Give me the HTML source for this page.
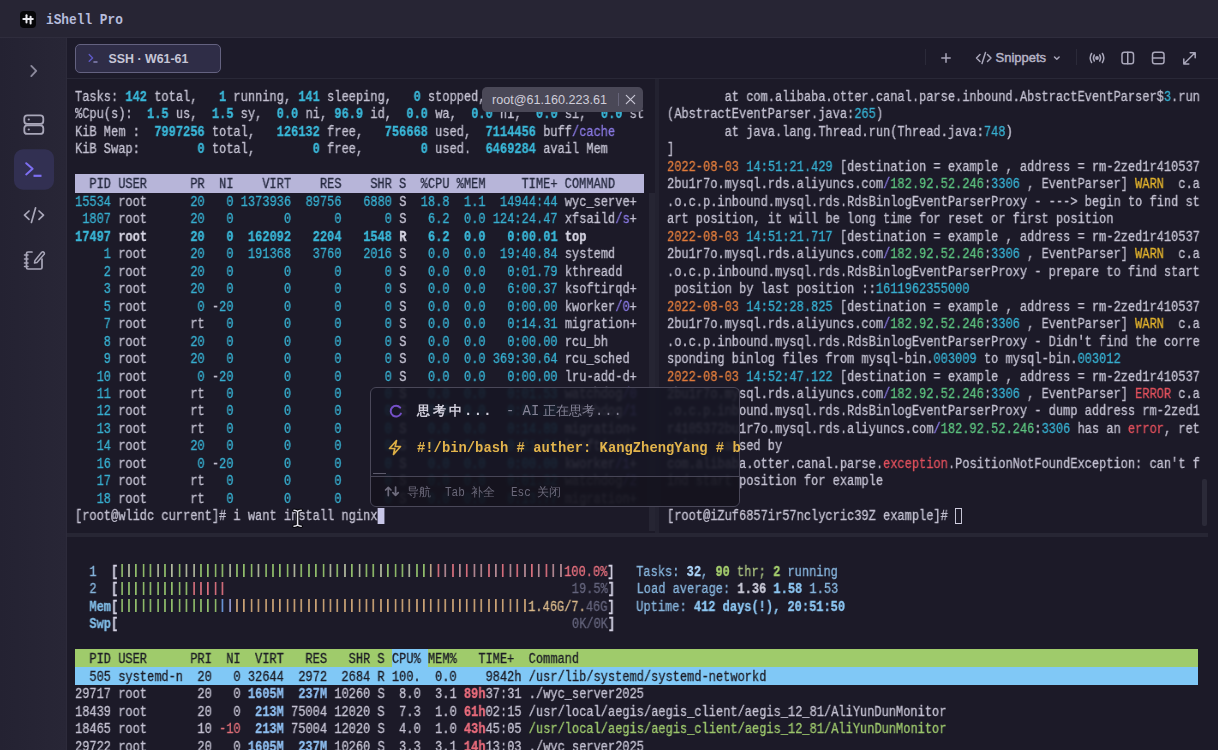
<!DOCTYPE html>
<html><head><meta charset="utf-8">
<style>
*{margin:0;padding:0;box-sizing:border-box}
html,body{width:1218px;height:750px;overflow:hidden;background:#1c1a28}
body{position:relative;font-family:"Liberation Mono",monospace;color:#c3c1d1}
.abs{position:absolute}
#title{left:0;top:0;width:1218px;height:38px;background:#272534;border-bottom:1px solid #2f2d3d}
#corner{left:0;top:0;width:14px;height:14px;background:#000;}
#corner2{left:0;top:0;width:28px;height:28px;border-radius:14px 0 0 0;background:#252332}
#appicon{left:20px;top:11px;width:16px;height:17px;background:#060609;border-radius:4px}
#apptitle{left:46px;top:11.4px;font:bold 14px/18px "Liberation Mono",monospace;color:#b6bcdc;transform:scaleX(0.915);transform-origin:0 0}
#side{left:0;top:38px;width:67px;height:712px;background:linear-gradient(90deg,#242232,#282636);border-right:1px solid #2d2b3b}
#tabbar{left:67px;top:38px;width:1151px;height:41px;background:#1d1b2a;border-bottom:1px solid #292837}
#tab{left:75px;top:44px;width:145.5px;height:29px;border:1.5px solid #646280;border-radius:5px;background:#2f2d47}
#tabtxt{left:108.5px;top:50.5px;font:bold 12.4px/16px "Liberation Sans",sans-serif;color:#c6c5d6}
.ln{height:17.48px;white-space:pre;font-size:14px;line-height:17.48px;-webkit-text-stroke:0.3px}
.ln>span,.ln{}
.pane{position:absolute;overflow:hidden}
.txt{position:relative;top:1.9px;transform:scaleX(0.857143);transform-origin:0 0;will-change:transform}
#left{left:75px;top:86.9px;width:575px;height:440px}
#right{left:667px;top:86.9px;width:535px;height:440px}
#htop{left:75px;top:561.9px;width:1130px;height:190px}
.c{color:#37afd0}
.cb{color:#3ab7d8;font-weight:bold}
.wb{color:#d6d4e2;font-weight:bold}
.p{color:#8878e0}
.o{color:#e07c3c}
.g{color:#5cc07e}
.yb{color:#e3b32c}
.r{color:#e0505c}
.hdr{color:#262a40}
.cur{background:#c8c6e8}
.cur2{outline:1.8px solid #d2d0e2;outline-offset:-1.4px}
#vdiv{left:655px;top:79px;width:4px;height:454px;background:#232230}
#lthumb{left:648.5px;top:193px;width:6.5px;height:338px;background:#262533}
#rthumb{left:1202px;top:479px;width:5px;height:47px;background:#2b2a38;border-radius:2px}
#hdiv{left:67px;top:533px;width:1141px;height:4px;background:#272634}
/* htop */
.bar{display:inline-block;width:8.4px;height:17.48px;vertical-align:top;background:linear-gradient(currentColor,currentColor) no-repeat;background-size:1.9px 13px;background-position:3.25px 0.2px}
.hl{color:#86b4dc}
.hlb{color:#80bce6;font-weight:bold}
.hb{color:#d4d2e4;font-weight:bold}
.hg{color:#92bf6c}
.hg2{color:#b4bca0}
.hp{color:#c0a888}
.hr{color:#d9707e}
.hr2{color:#b88c96}
.hrt{color:#e6707e}
.hgy{color:#64647c}
.hbl{color:#6e9be0}
.hbl2{color:#9aa0d8}
.ho{color:#cca476}
.hot{color:#d8b88a}
.hwb{color:#8cc6f2;font-weight:bold}
.hwb2{color:#aed6fa;font-weight:bold}
.hgb{color:#a6cf6e;font-weight:bold}
.hgt{color:#a9c080}
.hwg{color:#c8c8d6;font-weight:bold}
.hh{color:#1d1d26}
.hhc{color:#1d1d26}
.hsel{color:#1d1d26}
.hred{color:#e06e78}
.hcy{color:#8ebef0;font-weight:bold}
.hrb{color:#ea6c7c;font-weight:bold}
.hgrn{color:#9cc66c}
/* toolbar */
.tb{stroke:#a9a7ba;fill:none;stroke-width:1.5;stroke-linecap:round;stroke-linejoin:round}
#snip{left:995.5px;top:50.3px;font:13px/16px "Liberation Sans",sans-serif;color:#b6b4c6;-webkit-text-stroke:0.45px #b6b4c6}
#tip{left:482px;top:87px;width:161px;height:25px;background:#4a4857;border-radius:5px}
#tiptxt{left:492px;top:92px;font:12.6px/16px "Liberation Sans",sans-serif;color:#cfcdd9}
#popup{left:370.3px;top:387.3px;width:370px;height:120px;border:1.2px solid #4a4859;border-radius:6px;background:rgba(23,22,36,0.89);backdrop-filter:blur(1.3px);overflow:hidden}
#popdiv{left:0;top:87.9px;width:100%;height:1.2px;background:#484657}
.pm{font-family:"Liberation Mono",monospace;font-size:15px;line-height:18px;white-space:pre;transform:scaleX(0.922);transform-origin:0 0}
.pf{font-family:"Liberation Mono",monospace;font-size:12px;line-height:14px;white-space:pre;color:#6b697a;transform:scaleX(0.9167);transform-origin:0 0}
#pfoot{left:0;top:89px;width:100%;height:31px;background:rgba(16,15,24,0.35)}
</style></head><body>
<div id="title" class="abs"></div>
<div id="appicon" class="abs"><svg width="16" height="17" viewBox="20 11 16 17"><g stroke="#ecebf2" stroke-width="2" stroke-linecap="round"><line x1="26.5" y1="15.3" x2="26.5" y2="22.5"/><line x1="30.6" y1="16.8" x2="30.6" y2="23.6"/><line x1="23.3" y1="18.9" x2="32.8" y2="18.9"/></g></svg></div>
<div id="apptitle" class="abs">iShell Pro</div>
<div id="side" class="abs"></div>
<svg class="abs" style="left:0;top:38px" width="67" height="712" viewBox="0 38 67 712">
 <path d="M31.3 65.9 L36.2 70.95 L31.3 76.1" stroke="#8c8a9c" stroke-width="1.9" fill="none" stroke-linecap="round" stroke-linejoin="round"/>
 <rect x="24.3" y="115.3" width="19" height="8.6" rx="3" stroke="#a9a7b9" stroke-width="1.8" fill="none"/>
 <rect x="24.3" y="125.3" width="19" height="8.6" rx="3" stroke="#a9a7b9" stroke-width="1.8" fill="none"/>
 <circle cx="28.8" cy="119.5" r="1.1" fill="#a9a7b9"/><circle cx="28.8" cy="129.5" r="1.1" fill="#a9a7b9"/>
 <rect x="14" y="149.3" width="40" height="40.4" rx="9" fill="#323052"/>
 <path d="M26.2 163.2 L32.6 168.8 L26.2 174.4" stroke="#7d6ff2" stroke-width="2" fill="none" stroke-linecap="round" stroke-linejoin="round"/>
 <line x1="33.5" y1="175.8" x2="41.5" y2="175.8" stroke="#7d6ff2" stroke-width="2.2"/>
 <path d="M29 211 L24.5 215.2 L29 219.4 M39 211 L43.5 215.2 L39 219.4 M35.6 207.8 L31.4 222.4" stroke="#a9a7b9" stroke-width="1.7" fill="none" stroke-linecap="round" stroke-linejoin="round"/>
 <path d="M32 252 H28 Q26.5 252 26.5 253.5 V267.5 Q26.5 269 28 269 H40.5 Q42 269 42 267.5 V259" stroke="#a9a7b9" stroke-width="1.7" fill="none" stroke-linecap="round"/>
 <path d="M24.5 255 H28 M24.5 259 H28 M24.5 263 H28 M24.5 266.5 H28" stroke="#a9a7b9" stroke-width="1.5" stroke-linecap="round"/>
 <path d="M35 260.5 L41.5 252.5 Q43 251 44 252.5 Q45 254 43.5 255 L37 262.5 L34.5 263 Z" stroke="#a9a7b9" stroke-width="1.5" fill="none" stroke-linejoin="round"/>
</svg>
<div id="tabbar" class="abs"></div>
<div id="tab" class="abs"></div>
<svg class="abs" style="left:85px;top:50px" width="16" height="16" viewBox="85 50 16 16"><path d="M89.2 54.6 L92.6 57.9 L89.2 61.2" stroke="#5e5ac8" stroke-width="1.4" fill="none" stroke-linecap="round" stroke-linejoin="round"/><line x1="93.4" y1="62" x2="97.5" y2="62" stroke="#8e8cc0" stroke-width="1.4"/></svg>
<div id="tabtxt" class="abs">SSH · W61-61</div>
<!-- toolbar -->
<svg class="abs" style="left:910px;top:38px" width="308" height="41" viewBox="910 38 308 41">
 <line x1="925.5" y1="49" x2="925.5" y2="65" stroke="#2b2a39" stroke-width="1"/>
 <path d="M946 53.8 V62.2 M941.8 58 H950.2" class="tb" stroke-width="1.5"/>
 <path d="M980 54.5 L976.5 58 L980 61.5 M987.5 54.5 L991 58 L987.5 61.5 M985.5 52.5 L982 63.5" class="tb" stroke-width="1.4"/>
 <path d="M1054.5 57 L1056.8 59.3 L1059.1 57" class="tb" stroke-width="1.2"/>
 <line x1="1076.5" y1="49" x2="1076.5" y2="65" stroke="#2b2a39" stroke-width="1"/>
 <circle cx="1097" cy="58" r="1.9" fill="#a9a7ba"/>
 <path d="M1094.3 55 Q1092.5 58 1094.3 61 M1099.7 55 Q1101.5 58 1099.7 61 M1091.6 53.5 Q1088.8 58 1091.6 62.5 M1102.4 53.5 Q1105.2 58 1102.4 62.5" class="tb" stroke-width="1.4"/>
 <rect x="1122" y="52.3" width="11.5" height="11.5" rx="2.3" class="tb" stroke-width="1.6"/>
 <line x1="1127.75" y1="52.3" x2="1127.75" y2="63.8" class="tb" stroke-width="1.6"/>
 <rect x="1152.5" y="52.3" width="11.5" height="11.5" rx="2.3" class="tb" stroke-width="1.6"/>
 <line x1="1152.5" y1="58.05" x2="1164" y2="58.05" class="tb" stroke-width="1.6"/>
 <path d="M1184 63.8 L1195 52.8 M1190.2 52.8 H1195.2 V57.8 M1183.8 59 V64 H1188.8" class="tb" stroke-width="1.4"/>
</svg>
<div id="snip" class="abs">Snippets</div>

<div id="vdiv" class="abs"></div>
<div id="lthumb" class="abs"></div>
<div id="rthumb" class="abs"></div>
<div id="hdiv" class="abs"></div>

<div class="abs" style="left:74.7px;top:174.1px;width:569.1px;height:18.5px;background:#b7b5d9"></div>
<div id="left" class="pane"><div class="txt">
<div class="ln">Tasks: <span class="cb">142</span> total,   <span class="cb">1</span> running, <span class="cb">141</span> sleeping,   <span class="cb">0</span> stopped,   <span class="cb">0</span> zombie</div>
<div class="ln">%Cpu(s):  <span class="cb">1.5</span> us,  <span class="cb">1.5</span> sy,  <span class="cb">0.0</span> ni, <span class="cb">96.9</span> id,  <span class="cb">0.0</span> wa,  <span class="cb">0.0</span> hi,  <span class="cb">0.0</span> si,  <span class="cb">0.0</span> st</div>
<div class="ln">KiB Mem :  <span class="cb">7997256</span> total,   <span class="cb">126132</span> free,   <span class="cb">756668</span> used,  <span class="cb">7114456</span> buff<span class="p">/cache</span></div>
<div class="ln">KiB Swap:        <span class="cb">0</span> total,        <span class="cb">0</span> free,        <span class="cb">0</span> used.  <span class="cb">6469284</span> avail Mem</div>
<div class="ln"></div>
<div class="ln"><span class="hdr">  PID USER      PR  NI    VIRT    RES    SHR S  %CPU %MEM     TIME+ COMMAND    </span></div>
<div class="ln"><span class="c">15534</span> root      <span class="c">20</span> <span class="c">  0</span> <span class="c">1373936</span> <span class="c"> 89756</span> <span class="c">  6880</span> S <span class="c"> 18.8</span> <span class="c"> 1.1</span> <span class="c"> 14944:44</span> wyc_serve+</div>
<div class="ln"><span class="c"> 1807</span> root      <span class="c">20</span> <span class="c">  0</span> <span class="c">      0</span> <span class="c">     0</span> <span class="c">     0</span> S <span class="c">  6.2</span> <span class="c"> 0.0</span> <span class="c">124:24.47</span> xfsaild<span class="p">/s</span>+</div>
<div class="ln"><span class="cb">17497</span> <span class="wb">root    </span>  <span class="cb">20</span> <span class="cb">  0</span> <span class="cb"> 162092</span> <span class="cb">  2204</span> <span class="cb">  1548</span> <span class="wb">R</span> <span class="cb">  6.2</span> <span class="cb"> 0.0</span> <span class="cb">  0:00.01</span> <span class="wb">top</span></div>
<div class="ln"><span class="c">    1</span> root      <span class="c">20</span> <span class="c">  0</span> <span class="c"> 191368</span> <span class="c">  3760</span> <span class="c">  2016</span> S <span class="c">  0.0</span> <span class="c"> 0.0</span> <span class="c"> 19:40.84</span> systemd</div>
<div class="ln"><span class="c">    2</span> root      <span class="c">20</span> <span class="c">  0</span> <span class="c">      0</span> <span class="c">     0</span> <span class="c">     0</span> S <span class="c">  0.0</span> <span class="c"> 0.0</span> <span class="c">  0:01.79</span> kthreadd</div>
<div class="ln"><span class="c">    3</span> root      <span class="c">20</span> <span class="c">  0</span> <span class="c">      0</span> <span class="c">     0</span> <span class="c">     0</span> S <span class="c">  0.0</span> <span class="c"> 0.0</span> <span class="c">  6:00.37</span> ksoftirqd+</div>
<div class="ln"><span class="c">    5</span> root      <span class="c"> 0</span> -<span class="c">20</span> <span class="c">      0</span> <span class="c">     0</span> <span class="c">     0</span> S <span class="c">  0.0</span> <span class="c"> 0.0</span> <span class="c">  0:00.00</span> kworker<span class="p">/0</span>+</div>
<div class="ln"><span class="c">    7</span> root      rt <span class="c">  0</span> <span class="c">      0</span> <span class="c">     0</span> <span class="c">     0</span> S <span class="c">  0.0</span> <span class="c"> 0.0</span> <span class="c">  0:14.31</span> migration+</div>
<div class="ln"><span class="c">    8</span> root      <span class="c">20</span> <span class="c">  0</span> <span class="c">      0</span> <span class="c">     0</span> <span class="c">     0</span> S <span class="c">  0.0</span> <span class="c"> 0.0</span> <span class="c">  0:00.00</span> rcu_bh</div>
<div class="ln"><span class="c">    9</span> root      <span class="c">20</span> <span class="c">  0</span> <span class="c">      0</span> <span class="c">     0</span> <span class="c">     0</span> S <span class="c">  0.0</span> <span class="c"> 0.0</span> <span class="c">369:30.64</span> rcu_sched</div>
<div class="ln"><span class="c">   10</span> root      <span class="c"> 0</span> -<span class="c">20</span> <span class="c">      0</span> <span class="c">     0</span> <span class="c">     0</span> S <span class="c">  0.0</span> <span class="c"> 0.0</span> <span class="c">  0:00.00</span> lru-add-d+</div>
<div class="ln"><span class="c">   11</span> root      rt <span class="c">  0</span> <span class="c">      0</span> <span class="c">     0</span> <span class="c">     0</span> S <span class="c">  0.0</span> <span class="c"> 0.0</span> <span class="c">  0:01.53</span> watchdog<span class="p">/0</span></div>
<div class="ln"><span class="c">   12</span> root      rt <span class="c">  0</span> <span class="c">      0</span> <span class="c">     0</span> <span class="c">     0</span> S <span class="c">  0.0</span> <span class="c"> 0.0</span> <span class="c">  0:01.20</span> watchdog<span class="p">/1</span></div>
<div class="ln"><span class="c">   13</span> root      rt <span class="c">  0</span> <span class="c">      0</span> <span class="c">     0</span> <span class="c">     0</span> S <span class="c">  0.0</span> <span class="c"> 0.0</span> <span class="c">  0:14.89</span> migration+</div>
<div class="ln"><span class="c">   14</span> root      <span class="c">20</span> <span class="c">  0</span> <span class="c">      0</span> <span class="c">     0</span> <span class="c">     0</span> S <span class="c">  0.0</span> <span class="c"> 0.0</span> <span class="c">  0:21.04</span> ksoftirqd+</div>
<div class="ln"><span class="c">   16</span> root      <span class="c"> 0</span> -<span class="c">20</span> <span class="c">      0</span> <span class="c">     0</span> <span class="c">     0</span> S <span class="c">  0.0</span> <span class="c"> 0.0</span> <span class="c">  0:00.00</span> kworker<span class="p">/1</span>+</div>
<div class="ln"><span class="c">   17</span> root      rt <span class="c">  0</span> <span class="c">      0</span> <span class="c">     0</span> <span class="c">     0</span> S <span class="c">  0.0</span> <span class="c"> 0.0</span> <span class="c">  0:01.32</span> watchdog<span class="p">/2</span></div>
<div class="ln"><span class="c">   18</span> root      rt <span class="c">  0</span> <span class="c">      0</span> <span class="c">     0</span> <span class="c">     0</span> S <span class="c">  0.0</span> <span class="c"> 0.0</span> <span class="c">  0:13.77</span> migration+</div>
<div class="ln">[root@wlidc current]# i want install nginx<span class="cur"> </span></div>
</div></div>
<div id="right" class="pane"><div class="txt">
<div class="ln">        at com.alibaba.otter.canal.parse.inbound.AbstractEventParser$<span class="c">3</span>.run</div>
<div class="ln">(AbstractEventParser.java:<span class="c">265</span>)</div>
<div class="ln">        at java.lang.Thread.run(Thread.java:<span class="c">748</span>)</div>
<div class="ln">]</div>
<div class="ln"><span class="o">2022-08-03</span> <span class="c">14:51:21.429</span> [destination = example , address = rm-2zed1r410537</div>
<div class="ln">2bu1r7o.mysql.rds.aliyuncs.com<span class="p">/</span><span class="g">182.92.52.246</span>:<span class="c">3306</span> , EventParser] <span class="yb">WARN</span>  c.a</div>
<div class="ln">.o.c.p.inbound.mysql.rds.RdsBinlogEventParserProxy - ---&gt; begin to find st</div>
<div class="ln">art position, it will be long time for reset or first position</div>
<div class="ln"><span class="o">2022-08-03</span> <span class="c">14:51:21.717</span> [destination = example , address = rm-2zed1r410537</div>
<div class="ln">2bu1r7o.mysql.rds.aliyuncs.com<span class="p">/</span><span class="g">182.92.52.246</span>:<span class="c">3306</span> , EventParser] <span class="yb">WARN</span>  c.a</div>
<div class="ln">.o.c.p.inbound.mysql.rds.RdsBinlogEventParserProxy - prepare to find start</div>
<div class="ln"> position by last position ::<span class="c">1611962355000</span></div>
<div class="ln"><span class="o">2022-08-03</span> <span class="c">14:52:28.825</span> [destination = example , address = rm-2zed1r410537</div>
<div class="ln">2bu1r7o.mysql.rds.aliyuncs.com<span class="p">/</span><span class="g">182.92.52.246</span>:<span class="c">3306</span> , EventParser] <span class="yb">WARN</span>  c.a</div>
<div class="ln">.o.c.p.inbound.mysql.rds.RdsBinlogEventParserProxy - Didn't find the corre</div>
<div class="ln">sponding binlog files from mysql-bin.<span class="c">003009</span> to mysql-bin.<span class="c">003012</span></div>
<div class="ln"><span class="o">2022-08-03</span> <span class="c">14:52:47.122</span> [destination = example , address = rm-2zed1r410537</div>
<div class="ln">2bu1r7o.mysql.rds.aliyuncs.com<span class="p">/</span><span class="g">182.92.52.246</span>:<span class="c">3306</span> , EventParser] <span class="r">ERROR</span> c.a</div>
<div class="ln">.o.c.p.inbound.mysql.rds.RdsBinlogEventParserProxy - dump address rm-2zed1</div>
<div class="ln">r4105372bu1r7o.mysql.rds.aliyuncs.com<span class="p">/</span><span class="g">182.92.52.246</span>:<span class="c">3306</span> has an <span class="r">error</span>, ret</div>
<div class="ln">rying. caused by</div>
<div class="ln">com.alibaba.otter.canal.parse.<span class="r">exception</span>.PositionNotFoundException: can't f</div>
<div class="ln">ind start position for example</div>
<div class="ln"></div>
<div class="ln">[root@iZuf6857ir57nclycric39Z example]# <span class="cur2"> </span></div>
</div></div>
<div class="abs" style="left:74.7px;top:649.3px;width:1123.6px;height:17.6px;background:#9fcb6b"></div>
<div class="abs" style="left:391.8px;top:649.3px;width:36px;height:17.6px;background:#80c8f6"></div>
<div class="abs" style="left:74.7px;top:666.9px;width:1123.6px;height:17.7px;background:#80c8f6"></div>
<div id="htop" class="pane"><div class="txt">
<div class="ln">  <span class="hl">1</span>  <span class="hb">[</span><i class="bar hg"></i><i class="bar hg2"></i><i class="bar hg"></i><i class="bar hg"></i><i class="bar hg"></i><i class="bar hg2"></i><i class="bar hg"></i><i class="bar hg2"></i><i class="bar hg"></i><i class="bar hg2"></i><i class="bar hg2"></i><i class="bar hg"></i><i class="bar hg"></i><i class="bar hg"></i><i class="bar hg"></i><i class="bar hg2"></i><i class="bar hg"></i><i class="bar hg"></i><i class="bar hg"></i><i class="bar hg2"></i><i class="bar hg"></i><i class="bar hg"></i><i class="bar hg"></i><i class="bar hg"></i><i class="bar hg2"></i><i class="bar hg"></i><i class="bar hg"></i><i class="bar hg"></i><i class="bar hg"></i><i class="bar hg2"></i><i class="bar hg"></i><i class="bar hg2"></i><i class="bar hg"></i><i class="bar hg2"></i><i class="bar hg"></i><i class="bar hg"></i><i class="bar hg2"></i><i class="bar hg"></i><i class="bar hg"></i><i class="bar hg"></i><i class="bar hg2"></i><i class="bar hg"></i><i class="bar hg"></i><i class="bar hp"></i><i class="bar hr"></i><i class="bar hr2"></i><i class="bar hr"></i><i class="bar hr2"></i><i class="bar hr"></i><i class="bar hr2"></i><i class="bar hr2"></i><i class="bar hr"></i><i class="bar hr2"></i><i class="bar hr"></i><i class="bar hr2"></i><i class="bar hr"></i><i class="bar hr2"></i><i class="bar hr"></i><i class="bar hr2"></i><i class="bar hr"></i><i class="bar hr2"></i><i class="bar hr2"></i><span class="hrt">100.0%</span><span class="hb">]</span>   <span class="hl">Tasks: </span><span class="hwb2">32</span><span class="hl">, </span><span class="hgb">90</span><span class="hgt"> thr; </span><span class="hgb">2</span><span class="hl"> running</span></div>
<div class="ln">  <span class="hl">2</span>  <span class="hb">[</span><i class="bar hg"></i><i class="bar hg"></i><i class="bar hg"></i><i class="bar hg"></i><i class="bar hg"></i><i class="bar hg"></i><i class="bar hg"></i><i class="bar hg"></i><i class="bar hg"></i><i class="bar hg"></i><i class="bar hr"></i><i class="bar hr"></i><i class="bar hr"></i><i class="bar hr"></i><i class="bar hr"></i>                                                <span class="hgy">19.5%</span><span class="hb">]</span>   <span class="hl">Load average: </span><span class="hwg">1.36</span> <span class="hwb">1.58</span> <span class="hl">1.53</span></div>
<div class="ln">  <span class="hlb">Mem</span><span class="hb">[</span><i class="bar hg"></i><i class="bar hg"></i><i class="bar hg"></i><i class="bar hg"></i><i class="bar hg"></i><i class="bar hg"></i><i class="bar hg"></i><i class="bar hg"></i><i class="bar hg"></i><i class="bar hg"></i><i class="bar hg"></i><i class="bar hg"></i><i class="bar hg"></i><i class="bar hg"></i><i class="bar hbl"></i><i class="bar hbl2"></i><i class="bar ho"></i><i class="bar ho"></i><i class="bar ho"></i><i class="bar ho"></i><i class="bar ho"></i><i class="bar ho"></i><i class="bar ho"></i><i class="bar ho"></i><i class="bar ho"></i><i class="bar ho"></i><i class="bar ho"></i><i class="bar ho"></i><i class="bar ho"></i><i class="bar ho"></i><i class="bar ho"></i><i class="bar ho"></i><i class="bar ho"></i><i class="bar ho"></i><i class="bar ho"></i><i class="bar ho"></i><i class="bar ho"></i><i class="bar ho"></i><i class="bar ho"></i><i class="bar ho"></i><i class="bar ho"></i><i class="bar ho"></i><i class="bar ho"></i><i class="bar ho"></i><i class="bar ho"></i><i class="bar ho"></i><i class="bar ho"></i><i class="bar ho"></i><i class="bar ho"></i><i class="bar ho"></i><i class="bar ho"></i><i class="bar ho"></i><i class="bar ho"></i><i class="bar ho"></i><i class="bar ho"></i><i class="bar ho"></i><i class="bar ho"></i><span class="hot">1.46G/7.</span><span class="hgy">46G</span><span class="hb">]</span>   <span class="hl">Uptime: </span><span class="hwb">412 days(!), 20:51:50</span></div>
<div class="ln">  <span class="hlb">Swp</span><span class="hb">[</span>                                                               <span class="hgy">0K/0K</span><span class="hb">]</span></div>
<div class="ln"></div>
<div class="ln"><span class="hh">  PID USER      PRI  NI  VIRT   RES   SHR S </span><span class="hhc">CPU% </span><span class="hh">MEM%   TIME+  Command                                                                                      </span></div>
<div class="ln"><span class="hsel">  505 systemd-n  20   0 32644  2972  2684 R 100.  0.0    9842h /usr/lib/systemd/systemd-networkd                                                            </span></div>
<div class="ln">29717 root       20   0 <span class="hcy">1605M</span> <span class="hcy"> 237M</span> 10260 S  8.0  3.1 <span class="hrb">89h</span>37:31 ./wyc_server2025</div>
<div class="ln">18439 root       20   0 <span class="hcy"> 213M</span> 75004 12020 S  7.3  1.0 <span class="hrb">61h</span>02:15 /usr/local/aegis/aegis_client/aegis_12_81/AliYunDunMonitor</div>
<div class="ln">18465 root       10 <span class="hred">-10</span> <span class="hcy"> 213M</span> 75004 12020 S  4.0  1.0 <span class="hrb">43h</span>45:05 <span class="hgrn">/usr/local/aegis/aegis_client/aegis_12_81/AliYunDunMonitor</span></div>
<div class="ln">29722 root       20   0 <span class="hcy">1605M</span> <span class="hcy"> 237M</span> 10260 S  3.3  3.1 <span class="hrb">14h</span>13:03 ./wyc_server2025</div>
</div></div>

<svg class="abs" style="left:290px;top:506px" width="15" height="24" viewBox="290 506 15 24"><path d="M294 510.2 Q296.2 510.2 297.6 511.5 Q299 510.2 301.2 510.2 M297.6 511.5 V525 M294 526.2 Q296.2 526.2 297.6 525 Q299 526.2 301.2 526.2" stroke="#050508" stroke-width="3.4" fill="none" stroke-linecap="round"/><path d="M294 510.2 Q296.2 510.2 297.6 511.5 Q299 510.2 301.2 510.2 M297.6 511.5 V525 M294 526.2 Q296.2 526.2 297.6 525 Q299 526.2 301.2 526.2" stroke="#e8e6f0" stroke-width="1.5" fill="none" stroke-linecap="round"/></svg>
<div id="tip" class="abs"></div>
<div id="tiptxt" class="abs">root@61.160.223.61</div>
<div class="abs" style="left:618px;top:93px;width:1px;height:13px;background:#67657a"></div>
<svg class="abs" style="left:624px;top:93px" width="13" height="13" viewBox="0 0 13 13"><path d="M2.3 2.3 L10.7 10.7 M10.7 2.3 L2.3 10.7" stroke="#c9c7d5" stroke-width="1.2" stroke-linecap="round"/></svg>

<div id="popup" class="abs">
 <div id="pfoot" class="abs"></div>
 <div id="popdiv" class="abs"></div>
 <div class="abs" style="left:1.7px;top:84.3px;width:13.2px;height:1.6px;background:#5d5b6c"></div>
</div>
<svg class="abs" style="left:388.3px;top:403px" width="16" height="16" viewBox="0 0 16 16"><path d="M12.2 4.6 A5.4 5.4 0 1 0 12.9 10.6" stroke="#7550c8" stroke-width="2" fill="none" stroke-linecap="round"/></svg>
<div class="abs pm" style="left:417px;top:403px;font-size:13px;font-weight:bold;color:#d3d1de;transform:none;letter-spacing:3.2px">思考中</div>
<div class="abs pm" style="left:464px;top:403px;font-weight:bold;color:#d3d1de;letter-spacing:1.5px">...</div>
<div class="abs pm" style="left:506px;top:403px;color:#858396">- AI</div>
<div class="abs pm" style="left:543px;top:403px;font-size:12.5px;color:#858396;transform:none;letter-spacing:0px">正在思考</div>
<div class="abs pm" style="left:595px;top:403px;color:#858396;letter-spacing:1px">...</div>
<svg class="abs" style="left:387px;top:439px" width="16" height="17" viewBox="0 0 16 17"><path d="M9.5 1.5 L2.5 9.5 H7.8 L6.5 15.5 L13.5 7.5 H8.2 Z" stroke="#dcae45" stroke-width="1.7" fill="none" stroke-linejoin="round"/></svg>
<div class="abs pm" style="left:417px;top:439.5px;font-weight:bold;color:#e2b44c;width:355px;overflow:hidden">#!/bin/bash # auther: KangZhengYang # b</div>
<svg class="abs" style="left:383px;top:484px" width="18" height="14" viewBox="383 484 18 14"><path d="M388.3 487.3 V495.6 M385.6 490 L388.3 487.3 L391 490 M395.6 487 V495.3 M392.9 492.6 L395.6 495.3 L398.3 492.6" stroke="#6e6c7d" stroke-width="1.7" fill="none" stroke-linecap="round" stroke-linejoin="round"/></svg>
<div class="abs pf" style="left:407px;top:486px;font-size:12px;transform:none">导航</div>
<div class="abs pf" style="left:445px;top:486px">Tab</div>
<div class="abs pf" style="left:471px;top:486px;font-size:12px;transform:none">补全</div>
<div class="abs pf" style="left:511px;top:486px">Esc</div>
<div class="abs pf" style="left:537px;top:486px;font-size:12px;transform:none">关闭</div>
</body></html>
